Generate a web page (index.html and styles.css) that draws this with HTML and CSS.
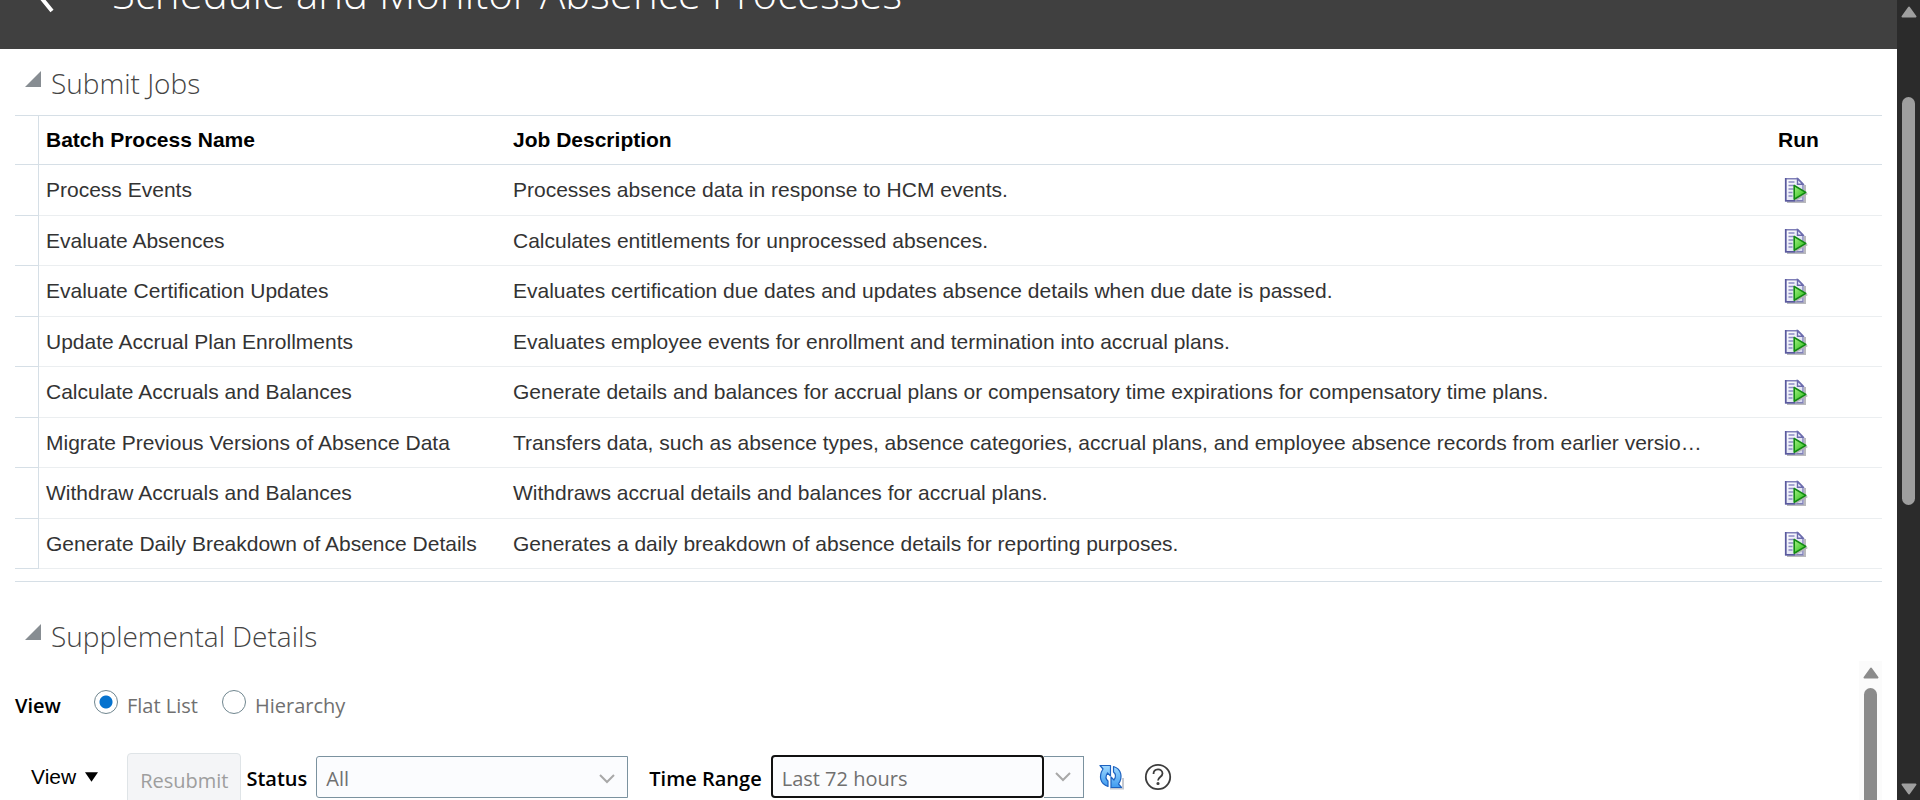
FILE: index.html
```html
<!DOCTYPE html>
<html lang="en">
<head>
<meta charset="utf-8">
<title>Schedule and Monitor Absence Processes</title>
<link rel="stylesheet" href="styles.css">
</head>
<body>
<svg class="sprite" aria-hidden="true">
  <defs>
    <linearGradient id="play" x1="0" y1="0" x2="1" y2="1">
      <stop offset="0" stop-color="#a6ee86"/><stop offset="1" stop-color="#22bd10"/>
    </linearGradient>
    <linearGradient id="paper" x1="0" y1="0" x2="1" y2="1">
      <stop offset="0" stop-color="#fff"/><stop offset="1" stop-color="#d3d6ee"/>
    </linearGradient>
    <linearGradient id="blue" x1="0" y1="0" x2="0" y2="1">
      <stop offset="0" stop-color="#9fd8ff"/><stop offset="1" stop-color="#3f9bef"/>
    </linearGradient>
  </defs>
  <symbol id="run" viewBox="0 0 24 26">
    <path d="M3 25h18V8" fill="none" stroke="#b9b9bd" stroke-width="2"/>
    <path d="M1.7 1.7H14l5 5v17H1.7z" fill="url(#paper)" stroke="#8080b8" stroke-width="1.4"/>
    <path d="M1.7 1v23.5M1 23.700h10" stroke="#5a5a9e" stroke-width="1.6"/>
    <path d="M13.500 1.700v5.500H19z" fill="#eef" stroke="#6a6aac" stroke-width="1.4"/>
    <path d="M4.500 5h6M4.500 8.500h6M4.500 12h5M4.500 15.500h4M4.500 19h4" stroke="#8c8cc4" stroke-width="1.4"/>
    <path d="M11.500 9.500v14.500L24 17z" fill="#b4b4b8"/>
    <path d="M10.200 8.500v13.800L21.800 15.400z" fill="url(#play)" stroke="#128a12" stroke-width="1.6" stroke-linejoin="round"/>
  </symbol>
</svg>
<div class="app">
  <div class="page">
    <header class="banner">
      <button class="back" type="button" aria-label="Back">
        <svg width="20" height="36" viewBox="0 0 20 36"><path d="M17 2L3 18l13 16" fill="none" stroke="#fff" stroke-width="4"/></svg>
      </button>
      <h1 class="title">Schedule and Monitor Absence Processes</h1>
    </header>

    <main class="content">
      <section>
        <h2 class="heading"><span class="disclosure"></span>Submit Jobs</h2>
        <div class="table-frame">
          <table class="jobs">
            <colgroup><col class="col-handle"><col class="col-name"><col><col class="col-run"></colgroup>
            <thead>
              <tr><td></td><th scope="col">Batch Process Name</th><th scope="col">Job Description</th><th scope="col" class="run-cell">Run</th></tr>
            </thead>
            <tbody>
              <tr><td></td><td>Process Events</td><td>Processes absence data in response to HCM events.</td><td class="run-cell"><button class="run" type="button" aria-label="Run Process Events"><svg width="24" height="26"><use href="#run"/></svg></button></td></tr>
              <tr><td></td><td>Evaluate Absences</td><td>Calculates entitlements for unprocessed absences.</td><td class="run-cell"><button class="run" type="button" aria-label="Run Evaluate Absences"><svg width="24" height="26"><use href="#run"/></svg></button></td></tr>
              <tr><td></td><td>Evaluate Certification Updates</td><td>Evaluates certification due dates and updates absence details when due date is passed.</td><td class="run-cell"><button class="run" type="button" aria-label="Run Evaluate Certification Updates"><svg width="24" height="26"><use href="#run"/></svg></button></td></tr>
              <tr><td></td><td>Update Accrual Plan Enrollments</td><td>Evaluates employee events for enrollment and termination into accrual plans.</td><td class="run-cell"><button class="run" type="button" aria-label="Run Update Accrual Plan Enrollments"><svg width="24" height="26"><use href="#run"/></svg></button></td></tr>
              <tr><td></td><td>Calculate Accruals and Balances</td><td>Generate details and balances for accrual plans or compensatory time expirations for compensatory time plans.</td><td class="run-cell"><button class="run" type="button" aria-label="Run Calculate Accruals and Balances"><svg width="24" height="26"><use href="#run"/></svg></button></td></tr>
              <tr><td></td><td>Migrate Previous Versions of Absence Data</td><td>Transfers data, such as absence types, absence categories, accrual plans, and employee absence records from earlier versio…</td><td class="run-cell"><button class="run" type="button" aria-label="Run Migrate Previous Versions of Absence Data"><svg width="24" height="26"><use href="#run"/></svg></button></td></tr>
              <tr><td></td><td>Withdraw Accruals and Balances</td><td>Withdraws accrual details and balances for accrual plans.</td><td class="run-cell"><button class="run" type="button" aria-label="Run Withdraw Accruals and Balances"><svg width="24" height="26"><use href="#run"/></svg></button></td></tr>
              <tr><td></td><td>Generate Daily Breakdown of Absence Details</td><td>Generates a daily breakdown of absence details for reporting purposes.</td><td class="run-cell"><button class="run" type="button" aria-label="Run Generate Daily Breakdown of Absence Details"><svg width="24" height="26"><use href="#run"/></svg></button></td></tr>
            </tbody>
          </table>
        </div>
      </section>

      <section class="supplemental">
        <h2 class="heading"><span class="disclosure"></span>Supplemental Details</h2>
        <div class="panel">
          <div class="panel-body">
            <div class="view-row" role="radiogroup" aria-labelledby="view-label">
              <span class="view-label" id="view-label">View</span>
              <label class="choice"><input type="radio" name="view" checked><span>Flat List</span></label>
              <label class="choice"><input type="radio" name="view"><span>Hierarchy</span></label>
            </div>
            <div class="toolbar">
              <button class="menu" type="button">View<svg width="13" height="10" viewBox="0 0 14 10"><path d="M0 0h14L7 10z"/></svg></button>
              <button class="resubmit" type="button" disabled>Resubmit</button>
              <label class="field-label" for="status">Status</label>
              <span class="status-box">
                <select class="status" id="status"><option>All</option></select>
                <svg class="status-arrow" width="16" height="10" viewBox="0 0 16 10"><path d="M1 1l7 7 7-7" fill="none" stroke="#a8a8a8" stroke-width="2"/></svg>
              </span>
              <label class="field-label range-label" for="range">Time Range</label>
              <span class="combo">
                <input class="range" id="range" type="text" value="Last 72 hours">
                <button class="combo-button" type="button" aria-label="Show time ranges"><svg width="16" height="10" viewBox="0 0 16 10"><path d="M1 1l7 7 7-7" fill="none" stroke="#a8a8a8" stroke-width="2"/></svg></button>
              </span>
              <button class="icon-button" type="button" aria-label="Refresh">
                <svg width="26" height="26" viewBox="0 0 26 26">
                  <path d="M12 24.500h13V14" fill="none" stroke="#c4c8d0" stroke-width="2"/>
                  <g fill="url(#blue)" stroke="#1d62c0" stroke-width="1.2" stroke-linejoin="round">
                    <path d="M2 1.500h10.500v10.500L9.500 9c-2 3-2 6 .5 8v5.500C2 20 .500 12 5 5z"/>
                    <path d="M23.500 23.500H13V13l3 3c2-3 2-6-.5-8V2.500C23.500 5 25 13 20.500 20z"/>
                  </g>
                </svg>
              </button>
              <button class="icon-button help" type="button" aria-label="Help">
                <svg width="28" height="28" viewBox="0 0 28 28" fill="none" stroke="#3c3c3c" stroke-width="1.8">
                  <circle cx="14" cy="14" r="12.2"/>
                  <path d="M9.500 11c0-6 9-6 9-.5 0 3.500-4.500 3.500-4.500 7"/>
                  <circle cx="14" cy="20.500" r=".7" fill="#3c3c3c"/>
                </svg>
              </button>
            </div>
          </div>
          <div class="scroll scroll-inner" aria-hidden="true">
            <svg width="16" height="12" viewBox="0 0 16 12"><path d="M8 1.500L14.500 10.500h-13z" fill="#8b8b8b" stroke="#8b8b8b" stroke-width="2" stroke-linejoin="round"/></svg>
            <span class="thumb"></span>
          </div>
        </div>
      </section>
    </main>
  </div>
  <div class="scroll scroll-outer" aria-hidden="true">
    <svg width="16" height="12" viewBox="0 0 16 12"><path d="M8 1.500L14.500 10.500h-13z" fill="#9f9f9f" stroke="#9f9f9f" stroke-width="2" stroke-linejoin="round"/></svg>
    <div class="track"><span class="thumb"></span></div>
    <svg width="16" height="12" viewBox="0 0 16 12"><path d="M8 10.500L14.500 1.500h-13z" fill="#9f9f9f" stroke="#9f9f9f" stroke-width="2" stroke-linejoin="round"/></svg>
  </div>
</div>
</body>
</html>
```
FILE: styles.css
```css
* { box-sizing: border-box; }

body {
  margin: 0;
  background: #fff;
  color: #333;
  font-family: "Liberation Sans", Arial, sans-serif;
  font-size: 20px;
}

button { padding: 0; border: 0; background: none; font: inherit; color: inherit; }
svg { display: block; }
.sprite { position: absolute; width: 0; height: 0; }

.app {
  display: grid;
  grid-template-columns: minmax(0, 1fr) 23px;
  height: 100vh;
  overflow: hidden;
}
.page { display: flex; flex-direction: column; min-height: 0; overflow: hidden; }

/* Banner, scrolled partly out of view */
.banner {
  display: flex;
  align-items: flex-end;
  flex: none;
  gap: 56px;
  height: 49px;
  padding: 0 36px 26px;
  background: #404040;
  color: #fff;
}
.back { margin-bottom: 10px; }
.title {
  margin: 0;
  font: 300 42px/60px "Open Sans", "Noto Sans", sans-serif;
  white-space: nowrap;
}

.content { flex: 1; min-height: 0; padding: 0 15px; }

.heading {
  display: flex;
  align-items: center;
  gap: 10px;
  margin: 0;
  padding: 14px 10px 12px;
  color: #444;
  font: 300 28px/40px "Open Sans", "Noto Sans", sans-serif;
}
.disclosure {
  width: 16px;
  height: 16px;
  margin-bottom: 8px;
  background: #878d92;
  clip-path: polygon(100% 0, 100% 100%, 0 100%);
}

.table-frame {
  padding-bottom: 12px;
  border: solid #d6dfe6;
  border-width: 1px 0;
}
.jobs {
  width: 100%;
  table-layout: fixed;
  border-collapse: separate;
  border-spacing: 0;
  font-size: 21px;
}
.col-handle { width: 24px; }
.col-name { width: 467px; }
.col-run { width: 167px; }
.jobs td, .jobs th {
  height: 51px;
  padding: 0 7px;
  border-bottom: 1px solid #ebeef0;
  text-align: left;
  white-space: nowrap;
}
.jobs tr:nth-child(even) td { height: 50px; }
.jobs thead th, .jobs thead td {
  height: 49px;
  border-bottom-color: #d6dfe6;
  color: #000;
}
.jobs td:first-child {
  padding: 0;
  border-right: 1px solid #d6dfe6;
  border-bottom-color: #d6dfe6;
}
.jobs .run-cell { text-align: center; }
.run { display: inline-block; vertical-align: middle; margin-right: 6px; }

.supplemental { padding-top: 20px; }
.supplemental .heading { padding: 14px 10px 5px; }
.panel { display: flex; align-items: flex-start; }
.panel-body {
  flex: 1;
  min-width: 0;
  padding-top: 28px;
  font-family: "Open Sans", "Noto Sans", sans-serif;
}

.view-row { display: flex; align-items: center; height: 32px; }
.view-label { width: 79px; color: #000; font-weight: 600; }
.choice {
  display: flex;
  align-items: center;
  gap: 9px;
  margin-right: 24px;
  color: #707070;
  font-weight: 500;
}
.choice input {
  appearance: none;
  width: 24px;
  height: 24px;
  margin: 0 0 6px;
  border: 1px solid #70868f;
  border-radius: 50%;
  background: #fff;
}
.choice input:checked { background: radial-gradient(circle, #0572ce 6px, #fff 7px); }

.toolbar { display: flex; align-items: flex-start; padding-top: 32px; font-weight: 600; }
.menu {
  display: flex;
  align-items: center;
  gap: 9px;
  height: 47px;
  margin: 0 29px 0 16px;
  color: #000;
  font-family: "Liberation Sans", Arial, sans-serif;
  font-size: 21px;
  font-weight: 400;
}
.resubmit {
  height: 54px;
  padding: 0 12px;
  border: 1px solid #dfe4e7;
  border-radius: 4px;
  background: #f4f5f7;
  color: #9e9e9e;
  font-weight: 500;
}
.field-label { margin: 0 9px 0 5px; color: #000; line-height: 52px; white-space: nowrap; }
.status-box { position: relative; }
.status {
  appearance: none;
  display: block;
  width: 312px;
  height: 42px;
  margin-top: 3px;
  padding: 2px 9px 0;
  border: 1px solid #7b929f;
  border-radius: 3px 0 0 3px;
  background: #fbfcfe;
  color: #707070;
  font: inherit;
  font-weight: 500;
}
.status-arrow { position: absolute; right: 13px; top: 21px; }
.range-label { margin-left: 21px; }
.combo { display: flex; margin-top: 2px; }
.range {
  width: 273px;
  height: 43px;
  padding: 3px 9px 0;
  border: 2px solid #111;
  border-radius: 4px;
  outline: 0;
  background: #fbfcfe;
  color: #707070;
  font: inherit;
  font-weight: 500;
}
.combo-button {
  display: grid;
  place-items: center;
  width: 40px;
  height: 42px;
  margin-top: 1px;
  border: 1px solid #7b929f;
  border-left: 0;
  background: #fbfcfe;
}
.icon-button { margin: 11px 0 0 14px; }
.help { margin: 10px 0 0 20px; }

.scroll { display: flex; flex-direction: column; align-items: center; }
.thumb { display: block; width: 13px; border-radius: 7px; }
.scroll-outer { padding: 6px 0 5px; background: #2b2b2b; }
.track { flex: 1; padding-top: 79px; }
.scroll-outer .thumb { height: 408px; background: #9f9f9f; }
.scroll-inner { width: 23px; gap: 9px; padding-top: 6px; background: #fbfbfb; }
.scroll-inner .thumb { height: 240px; background: #8b8b8b; }
```
